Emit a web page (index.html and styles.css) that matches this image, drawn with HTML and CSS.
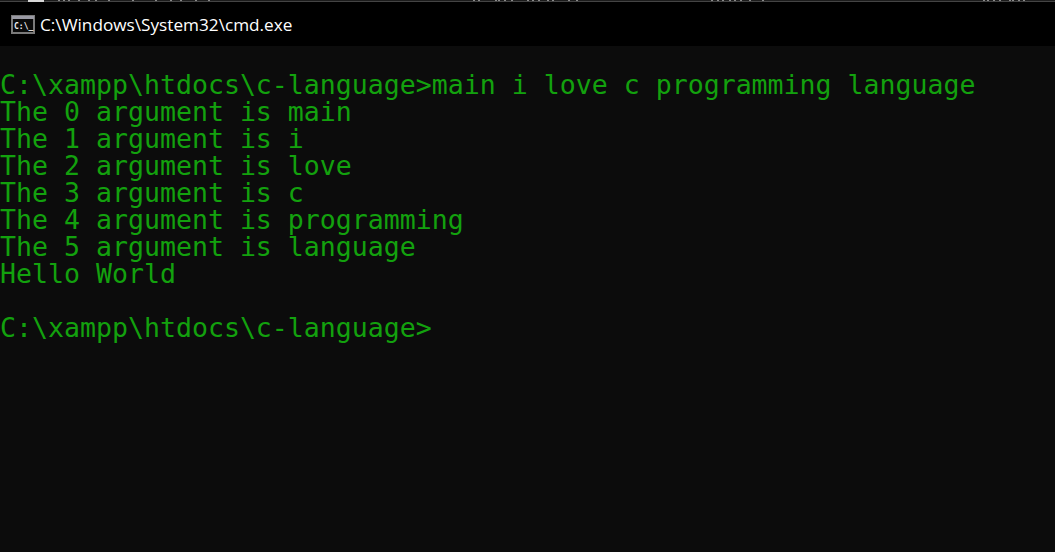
FILE: index.html
```html
<!DOCTYPE html>
<html lang="en">
<head>
<meta charset="utf-8">
<title>cmd.exe</title>
<link rel="stylesheet" href="styles.css">
</head>
<body>
<svg class="strip" width="1055" height="2" viewBox="0 0 1055 2" aria-hidden="true">
<rect width="1055" height="2" fill="#1c1c1c"/>
<rect y="1" width="1055" height="1" fill="#444"/>
<rect x="28" width="16" height="2" fill="#d8d8d8"/>
<g class="ticks-a">
<rect x="58" width="2" height="1"/><rect x="63" width="2" height="1"/><rect x="68" width="2" height="1"/><rect x="78" width="2" height="1"/><rect x="88" width="2" height="1"/><rect x="95" width="2" height="1"/><rect x="108" width="2" height="1"/><rect x="132" width="2" height="1"/><rect x="155" width="2" height="1"/><rect x="170" width="2" height="1"/><rect x="180" width="2" height="1"/><rect x="195" width="2" height="1"/><rect x="208" width="2" height="1"/>
<rect x="473" width="2" height="1"/><rect x="478" width="2" height="1"/><rect x="495" width="2" height="1"/><rect x="498" width="2" height="1"/><rect x="504" width="2" height="1"/><rect x="511" width="2" height="1"/><rect x="527" width="2" height="1"/><rect x="532" width="2" height="1"/><rect x="538" width="2" height="1"/><rect x="547" width="2" height="1"/><rect x="552" width="2" height="1"/><rect x="568" width="2" height="1"/><rect x="576" width="2" height="1"/>
<rect x="711" width="2" height="1"/><rect x="717" width="2" height="1"/><rect x="722" width="2" height="1"/><rect x="729" width="2" height="1"/><rect x="734" width="2" height="1"/><rect x="740" width="2" height="1"/><rect x="749" width="2" height="1"/><rect x="762" width="2" height="1"/>
<rect x="983" width="2" height="1"/><rect x="987" width="2" height="1"/><rect x="993" width="2" height="1"/><rect x="999" width="2" height="1"/><rect x="1009" width="2" height="1"/><rect x="1012" width="2" height="1"/><rect x="1018" width="2" height="1"/><rect x="1023" width="2" height="1"/>
</g>
</svg>
<header class="titlebar">
<svg class="icon" width="24" height="19" viewBox="0 0 24 19" aria-hidden="true">
<rect width="24" height="19" fill="#7a7a7a"/>
<rect x="1" y="1" width="22" height="3" fill="#9a9aa4"/>
<rect x="2" y="4" width="20" height="13" fill="#0a0a0a"/>
<text x="3" y="14" class="icon-text">C:\_</text>
</svg>
<span class="title">C:\Windows\System32\cmd.exe</span>
</header>
<pre class="console">
C:\xampp\htdocs\c-language&gt;main i love c programming language
The 0 argument is main
The 1 argument is i
The 2 argument is love
The 3 argument is c
The 4 argument is programming
The 5 argument is language
Hello World

C:\xampp\htdocs\c-language&gt;</pre>
</body>
</html>
```
FILE: styles.css
```css
html, body {
  margin: 0;
  height: 100%;
  background: #0c0c0c;
  overflow: hidden;
}
.strip {
  display: block;
}
.ticks-a {
  fill: #8a8a8a;
}
.titlebar {
  height: 44px;
  background: #000;
  display: flex;
  align-items: center;
  padding-left: 11px;
  gap: 5px;
}
.icon { flex: none; }
.icon-text {
  font: bold 8px "DejaVu Sans Mono", monospace;
  fill: #f0f0f0;
}
.title {
  font: 17.2px/1 "Open Sans", sans-serif;
  color: #fff;
  padding-top: 2px;
}
.console {
  margin: 0;
  padding-top: 25px;
  font: 26.57px/27px "DejaVu Sans Mono", monospace;
  color: #13a10e;
}
```
